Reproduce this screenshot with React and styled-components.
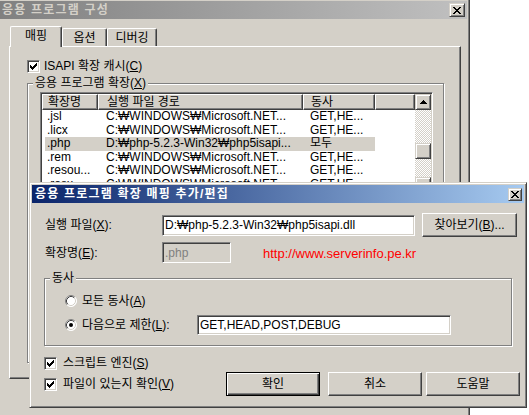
import React from 'react'
import styled, { createGlobalStyle, css } from 'styled-components'

const FACE = '#d4d0c8'
const SHADOW = '#808080'
const DARK = '#404040'

// little pixel-art glyphs, one 1x1 square per cell
const pixels = cells => cells.map(([x, y]) => `M${x} ${y}h1v1h-1z`).join('')

const CLOSE_X = pixels([
  [0, 0], [1, 0], [6, 0], [7, 0],
  [1, 1], [2, 1], [5, 1], [6, 1],
  [2, 2], [3, 2], [4, 2], [5, 2],
  [3, 3], [4, 3],
  [2, 4], [3, 4], [4, 4], [5, 4],
  [1, 5], [2, 5], [5, 5], [6, 5],
  [0, 6], [1, 6], [6, 6], [7, 6],
])

const CHECK = pixels([2, 3, 4, 3, 2, 1, 0].flatMap((t, x) => [[x, t], [x, t + 1], [x, t + 2]]))

const ARROW_UP = pixels([0, 1, 2, 3].flatMap(r => Array.from({ length: r * 2 + 1 }, (_, i) => [3 - r + i, r])))

const raised = css`
  border: 1px solid;
  border-color: #fff ${DARK} ${DARK} #fff;
  box-shadow: inset -1px -1px ${SHADOW};
`

const raisedSoft = css`
  border: 1px solid;
  border-color: ${FACE} ${DARK} ${DARK} ${FACE};
  box-shadow: inset 1px 1px #fff, inset -1px -1px ${SHADOW};
`

const sunken = css`
  border: 1px solid;
  border-color: ${SHADOW} #fff #fff ${SHADOW};
  box-shadow: inset 1px 1px ${DARK}, inset -1px -1px ${FACE};
`

const GlobalStyle = createGlobalStyle`
  *, *::before, *::after { box-sizing: border-box; }
  html, body { margin: 0; padding: 0; background: #fff; }
  body {
    font-family: "Liberation Sans", "Noto Sans CJK KR", sans-serif;
    font-size: 12px;
    line-height: 14px;
    color: #000;
  }
`

const Desktop = styled.div`
  position: relative;
  width: 529px;
  height: 415px;
  overflow: hidden;
  background: #fff;
`

const Window = styled.div`
  position: absolute;
  left: ${p => p.$left}px;
  top: ${p => p.$top}px;
  width: ${p => p.$width}px;
  height: ${p => p.$height}px;
  padding: 2px;
  background: ${FACE};
  ${raisedSoft};
  display: flex;
  flex-direction: column;
`

const TitleBar = styled.div`
  flex: none;
  height: 18px;
  display: flex;
  align-items: center;
  padding: 0 2px 0 3px;
  background: ${p => (p.$active
    ? 'linear-gradient(to right, #0a246a, #a6caf0)'
    : 'linear-gradient(to right, #808080, #c0c0c0)')};
  color: ${p => (p.$active ? '#fff' : FACE)};
  font-weight: bold;
  white-space: nowrap;
`

const TitleText = styled.span`
  letter-spacing: 1.2px;
`

const CloseButton = styled.div`
  margin-left: auto;
  width: ${p => p.$w}px;
  height: ${p => p.$h}px;
  background: ${FACE};
  ${raisedSoft};
  display: flex;
  align-items: center;
  justify-content: center;
`

const PropertyBody = styled.div`
  padding: 7px 6px 0 10px;
`

const TabStrip = styled.div`
  position: relative;
  z-index: 1;
  display: flex;
  align-items: flex-end;
  height: 21px;
  margin-bottom: -1px;
  padding-left: 1px;
`

const Tab = styled.div`
  width: ${p => p.$w}px;
  height: ${p => (p.$selected ? 21 : 18)}px;
  margin-bottom: ${p => (p.$selected ? 0 : 1)}px;
  display: flex;
  align-items: center;
  justify-content: center;
  background: ${FACE};
  border-top: 1px solid #fff;
  border-left: 1px solid #fff;
  border-right: 1px solid ${DARK};
  border-radius: 2px 2px 0 0;
  box-shadow: inset -1px 0 ${SHADOW};
  padding-bottom: ${p => (p.$selected ? 2 : 0)}px;
`

const TabPanel = styled.div`
  width: 452px;
  height: 333px;
  padding: 12px 0 0 17px;
  border: 1px solid;
  border-color: #fff ${DARK} ${DARK} #fff;
  box-shadow: inset -1px -1px ${SHADOW};
`

const CheckRow = styled.div`
  display: flex;
  align-items: center;
  height: ${p => p.$h || 14}px;
  margin-top: ${p => p.$mt || 0}px;
  gap: ${p => p.$gap || 4}px;
  white-space: nowrap;
`

const CheckBox = styled.span`
  flex: none;
  width: 13px;
  height: 13px;
  background: #fff;
  ${sunken};
  display: flex;
  align-items: center;
  justify-content: center;
`

const GroupBox = styled.fieldset`
  margin: ${p => p.$margin};
  padding: 0;
  min-width: 0;
  width: ${p => p.$width}px;
  height: ${p => p.$height}px;
  border: 1px solid ${SHADOW};
  box-shadow: inset 1px 1px #fff, 1px 1px #fff;
`

const GroupLabel = styled.legend`
  margin-left: 5px;
  padding: 0 2px;
  line-height: 13px;
  background: ${FACE};
  white-space: nowrap;
`

const GroupInner = styled.div`
  padding: ${p => p.$pad};
`

const ListView = styled.div`
  width: 393px;
  height: 103px;
  padding: 1px;
  background: #fff;
  ${sunken};
  display: flex;
`

const ListBody = styled.div`
  flex: 1;
  overflow: hidden;
`

const HeaderRow = styled.div`
  display: grid;
  grid-template-columns: 56px 205px 72px 40px;
  height: 16px;
`

const HeaderCell = styled.div`
  background: ${FACE};
  ${raised};
  line-height: 14px;
  padding-left: ${p => p.$pad}px;
  white-space: nowrap;
  overflow: hidden;
`

const Row = styled.div`
  display: grid;
  grid-template-columns: 53px 205px 72px;
  width: 330px;
  margin-left: 3px;
  height: 13.5px;
  line-height: 13.5px;
  background: ${p => (p.$selected ? FACE : 'transparent')};
  white-space: nowrap;

  & > span { overflow: hidden; }
  & > span:nth-child(1) { padding-left: 2px; }
  & > span:nth-child(2) { padding-left: 8px; }
  & > span:nth-child(3) { padding-left: 7px; }
`

const ScrollBar = styled.div`
  width: 16px;
  flex: none;
  display: flex;
  flex-direction: column;
`

const ScrollButton = styled.div`
  width: 16px;
  height: 16px;
  flex: none;
  background: ${FACE};
  ${raisedSoft};
  display: flex;
  align-items: center;
  justify-content: center;
`

const ScrollTrack = styled.div`
  flex: 1;
  background: repeating-conic-gradient(#fff 0 25%, ${FACE} 0 50%) 0 0 / 2px 2px;
`

const Thumb = styled.div`
  margin-top: 33px;
  height: 16px;
  background: ${FACE};
  ${raisedSoft};
`

const DialogBody = styled.div`
  display: flex;
  flex-direction: column;
  padding: 10px 0 0 12px;
`

const FormRow = styled.div`
  display: flex;
  align-items: center;
  height: ${p => p.$h}px;
  margin-top: ${p => p.$mt || 0}px;
`

const FieldLabel = styled.span`
  width: ${p => p.$w}px;
  padding-left: ${p => p.$pad || 0}px;
  flex: none;
  white-space: nowrap;
`

const TextField = styled.div`
  flex: none;
  width: ${p => p.$w}px;
  height: ${p => p.$h}px;
  padding: 0 2px;
  ${sunken};
  background: ${p => (p.$disabled ? FACE : '#fff')};
  color: ${p => (p.$disabled ? SHADOW : '#000')};
  display: flex;
  align-items: center;
  white-space: nowrap;
  overflow: hidden;
`

const PushButton = styled.button`
  flex: none;
  width: ${p => p.$w}px;
  height: 24px;
  margin-left: ${p => p.$ml || 0}px;
  padding: 0;
  font: inherit;
  color: #000;
  background: ${FACE};
  ${p => (p.$default
    ? css`
        border: 1px solid #000;
        box-shadow: inset 1px 1px #fff, inset -1px -1px ${DARK}, inset -2px -2px ${SHADOW};
      `
    : raised)}
`

const WebLink = styled.span`
  margin-left: 32px;
  padding-top: 3px;
  font-family: "Liberation Sans", Arial, sans-serif;
  font-size: 13px;
  color: #ff0000;
  white-space: nowrap;
`

const RadioRow = styled.div`
  display: flex;
  align-items: center;
  height: ${p => p.$h}px;
  margin-top: ${p => p.$mt || 0}px;
  white-space: nowrap;
`

const RadioText = styled.span`
  margin-left: 5px;
  width: ${p => (p.$w ? `${p.$w}px` : 'auto')};
`

const BottomArea = styled.div`
  display: flex;
  align-items: flex-start;
`

const CheckColumn = styled.div`
  padding-top: 9px;
`

const ButtonRow = styled.div`
  margin-left: auto;
  margin-top: 26px;
  margin-right: 4px;
  display: flex;
`

function Check() {
  return (
    <svg width="7" height="7" viewBox="0 0 7 7" shapeRendering="crispEdges">
      <path d={CHECK} fill="#000" />
    </svg>
  )
}

function Radio({ checked }) {
  return (
    <svg width="12" height="12" viewBox="0 0 12 12" style={{ flex: 'none' }}>
      <circle cx="6" cy="6" r="5.5" fill="#fff" />
      <path d="M9.89 2.11 A5.5 5.5 0 0 0 2.11 9.89" fill="none" stroke={SHADOW} />
      <path d="M2.11 9.89 A5.5 5.5 0 0 0 9.89 2.11" fill="none" stroke="#fff" />
      <path d="M9.18 2.82 A4.5 4.5 0 0 0 2.82 9.18" fill="none" stroke={DARK} />
      <path d="M2.82 9.18 A4.5 4.5 0 0 0 9.18 2.82" fill="none" stroke={FACE} />
      {checked && <circle cx="6" cy="6" r="2" fill="#000" />}
    </svg>
  )
}

function CloseGlyph() {
  return (
    <svg width="8" height="7" viewBox="0 0 8 7" shapeRendering="crispEdges">
      <path d={CLOSE_X} fill="#000" />
    </svg>
  )
}

function Arrow({ down }) {
  return (
    <svg width="7" height="4" viewBox="0 0 7 4" shapeRendering="crispEdges"
      style={down ? { transform: 'scaleY(-1)' } : undefined}>
      <path d={ARROW_UP} fill="#000" />
    </svg>
  )
}

const NET = 'C:₩WINDOWS₩Microsoft.NET...'

const rows = [
  ['.jsl', NET, 'GET,HE...'],
  ['.licx', NET, 'GET,HE...'],
  ['.php', 'D:₩php-5.2.3-Win32₩php5isapi...', '모두', true],
  ['.rem', NET, 'GET,HE...'],
  ['.resou...', NET, 'GET,HE...'],
  ['.rosx', NET, 'GET,HE...'],
]

export default function App() {
  return (
    <>
      <GlobalStyle />
      <Desktop>
        <Window $left={-4} $top={-2} $width={474} $height={440}>
          <TitleBar>
            <TitleText>응용 프로그램 구성</TitleText>
            <CloseButton $w={16} $h={14}><CloseGlyph /></CloseButton>
          </TitleBar>
          <PropertyBody>
            <TabStrip>
              <Tab $selected $w={52}>매핑</Tab>
              <Tab $w={45}>옵션</Tab>
              <Tab $w={50}>디버깅</Tab>
            </TabStrip>
            <TabPanel>
              <CheckRow>
                <CheckBox><Check /></CheckBox>
                <span>ISAPI 확장 캐시(<u>C</u>)</span>
              </CheckRow>
              <GroupBox $margin="4px 0 0 0" $width={417} $height={286}>
                <GroupLabel>응용 프로그램 확장(<u>X</u>)</GroupLabel>
                <GroupInner $pad="2px 0 0 12px">
                  <ListView>
                    <ListBody>
                      <HeaderRow>
                        <HeaderCell $pad={5}>확장명</HeaderCell>
                        <HeaderCell $pad={8}>실행 파일 경로</HeaderCell>
                        <HeaderCell $pad={7}>동사</HeaderCell>
                        <HeaderCell $pad={0} />
                      </HeaderRow>
                      {rows.map(([ext, path, verb, sel]) => (
                        <Row key={ext} $selected={sel}>
                          <span>{ext}</span>
                          <span>{path}</span>
                          <span>{verb}</span>
                        </Row>
                      ))}
                    </ListBody>
                    <ScrollBar>
                      <ScrollButton><Arrow /></ScrollButton>
                      <ScrollTrack><Thumb /></ScrollTrack>
                      <ScrollButton><Arrow down /></ScrollButton>
                    </ScrollBar>
                  </ListView>
                </GroupInner>
              </GroupBox>
            </TabPanel>
          </PropertyBody>
        </Window>

        <Window $left={29} $top={182} $width={498} $height={226}>
          <TitleBar $active>
            <TitleText>응용 프로그램 확장 매핑 추가/편집</TitleText>
            <CloseButton $w={14} $h={13}><CloseGlyph /></CloseButton>
          </TitleBar>
          <DialogBody>
            <FormRow $h={24}>
              <FieldLabel $w={118} $pad={1}>실행 파일(<u>X</u>):</FieldLabel>
              <TextField $w={253} $h={21}>D:₩php-5.2.3-Win32₩php5isapi.dll</TextField>
              <PushButton $w={95} $ml={7}>찾아보기(<u>B</u>)...</PushButton>
            </FormRow>
            <FormRow $h={21} $mt={5}>
              <FieldLabel $w={118} $pad={1}>확장명(<u>E</u>):</FieldLabel>
              <TextField $w={69} $h={21} $disabled>.php</TextField>
              <WebLink>http://www.serverinfo.pe.kr</WebLink>
            </FormRow>
            <GroupBox $margin="9px 0 0 0" $width={468} $height={74}>
              <GroupLabel>동사</GroupLabel>
              <GroupInner $pad="8px 0 0 20px">
                <RadioRow $h={16}>
                  <Radio />
                  <RadioText>모든 동사(<u>A</u>)</RadioText>
                </RadioRow>
                <RadioRow $h={21} $mt={5}>
                  <Radio checked />
                  <RadioText $w={115}>다음으로 제한(<u>L</u>):</RadioText>
                  <TextField $w={254} $h={20}>GET,HEAD,POST,DEBUG</TextField>
                </RadioRow>
              </GroupInner>
            </GroupBox>
            <BottomArea>
              <CheckColumn>
                <CheckRow $h={16} $gap={6}>
                  <CheckBox><Check /></CheckBox>
                  <span>스크립트 엔진(<u>S</u>)</span>
                </CheckRow>
                <CheckRow $h={16} $gap={6} $mt={5}>
                  <CheckBox><Check /></CheckBox>
                  <span>파일이 있는지 확인(<u>V</u>)</span>
                </CheckRow>
              </CheckColumn>
              <ButtonRow>
                <PushButton $w={94} $default>확인</PushButton>
                <PushButton $w={94} $ml={8}>취소</PushButton>
                <PushButton $w={94} $ml={4}>도움말</PushButton>
              </ButtonRow>
            </BottomArea>
          </DialogBody>
        </Window>
      </Desktop>
    </>
  )
}
